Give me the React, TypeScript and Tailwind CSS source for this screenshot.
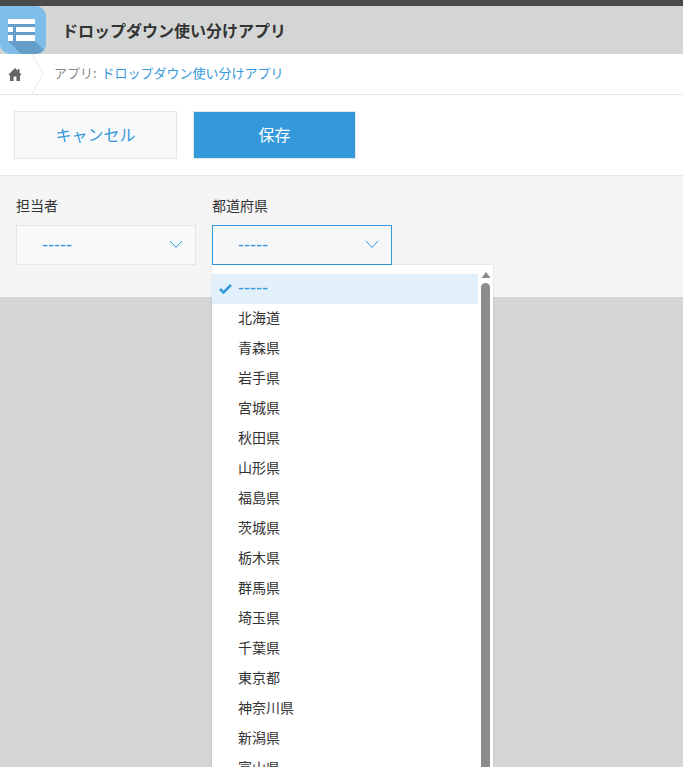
const FONT = "font-['Meiryo','Noto_Sans_CJK_JP','Noto_Sans',sans-serif]";

const PREFS = ["北海道","青森県","岩手県","宮城県","秋田県","山形県","福島県","茨城県","栃木県","群馬県","埼玉県","千葉県","東京都","神奈川県","新潟県","富山県"];

function Chevron() {
  return (
    <svg width="14" height="9" viewBox="0 0 14 9" fill="none" stroke="#3498db" strokeWidth="1">
      <path d="M1 1l6 6.5L13 1" />
    </svg>
  );
}

function Dashes() {
  return <span className="font-['Liberation_Sans',sans-serif] text-[18px] leading-none text-[#3498db]">-----</span>;
}

function AppIcon() {
  return (
    <div className="h-12 w-[46px] overflow-hidden rounded-tr-[10px] rounded-br-[10px] rounded-bl-[10px] bg-[#7dbde8]">
      <svg width="46" height="48" viewBox="0 0 46 48">
        <path d="M8 13h27v22l11 11v2H21L8 35z" fill="#659fc9" />
        <path d="M8 13h27v5H8zM8 21h5v5H8zM16 21h19v5H16zM8 29h5v6H8zM16 29h19v6H16z" fill="#fff" />
      </svg>
    </div>
  );
}

function Select({ active, label, className }: { active?: boolean; label: string; className: string }) {
  return (
    <div className={className}>
      <div className="h-[19px] text-[14px] leading-[19px] text-[#333]">{label}</div>
      <div className={`mt-[10px] flex h-10 w-[180px] items-center justify-between border pb-[1px] pl-[25px] pr-[12px] ${active ? "border-[#3498db] bg-[#f5f7f8]" : "border-[#e3e7e8] bg-[#f7f9fa]"}`}>
        <Dashes />
        <Chevron />
      </div>
    </div>
  );
}

export default function App() {
  return (
    <div className={`${FONT} relative h-[767px] w-[683px] overflow-hidden bg-[#d4d6d5]`}>
      <div className="h-[6px] bg-[#4a4a4a]" />
      <div className="flex h-12 items-center">
        <AppIcon />
        <div className="ml-[16px] text-[16px] font-bold text-[#333]">ドロップダウン使い分けアプリ</div>
      </div>
      <div className="flex h-[41px] items-center border-b border-[#e3e7e8] bg-white">
        <div className="relative h-10 w-[44px] shrink-0 self-start">
          <svg className="absolute left-[8px] top-[13px]" width="14" height="14" viewBox="0 0 14 14">
            <path d="M7 1L0.500 7.500 1.500 8.500 2 8v6h3.600V9.600h2.800V14H12V8l.5.500 1-1L11.500 5.500V2H9.800v1.800z" fill="#666" />
          </svg>
          <svg className="absolute left-[30px] top-0" width="14" height="40" viewBox="0 0 14 40" fill="none">
            <path d="M2 0l11 20L2 40" stroke="#e8eaeb" />
          </svg>
        </div>
        <div className="ml-[10px] pb-[2px] text-[13px]">
          <span className="mr-[2px] text-[#888]">アプリ: </span>
          <span className="text-[#3498db]">ドロップダウン使い分けアプリ</span>
        </div>
      </div>
      <div className="flex h-[81px] gap-[16px] border-b border-[#e3e7e8] bg-white pl-[14px] pt-[16px]">
        <button className="h-12 w-[163px] border border-[#e3e7e8] bg-[#f7f9fa] pb-[2px] text-[16px] text-[#3498db]">キャンセル</button>
        <button className="h-12 w-[163px] border border-[#e3e7e8] bg-[#3498db] pb-[2px] text-[16px] text-white">保存</button>
      </div>
      <div className="flex h-[121px] bg-[#f5f5f5] pl-4 pt-5">
        <Select label="担当者" className="w-[196px]" />
        <Select label="都道府県" active className="w-[180px]" />
      </div>
      <div className="absolute left-[212px] top-[265px] flex w-[281px] bg-white pt-[9px] shadow-[0_0_2px_rgba(0,0,0,0.15)]">
        <div className="w-[266px]">
          <div className="relative flex h-[30px] items-center bg-[#e1f0fb] pb-[3px] pl-[26px]">
            <svg className="absolute left-[7px] top-[9px]" width="13" height="11" viewBox="0 0 13 11">
              <path d="M1 6l3.500 3.500L12 2" fill="none" stroke="#3498db" strokeWidth="2.500" />
            </svg>
            <Dashes />
          </div>
          {PREFS.map((p) => (
            <div key={p} className="flex h-[30px] items-center pb-[4px] pl-[26px] text-[14px] text-[#333]">{p}</div>
          ))}
        </div>
        <div className="relative w-[15px]">
          <svg className="absolute left-[3px] top-[-2px]" width="10" height="6" viewBox="0 0 10 6">
            <path d="M5 0l4.500 6H.5z" fill="#888" />
          </svg>
          <div className="absolute left-[3px] top-[9px] h-[600px] w-[9px] rounded-t-[5px] bg-[#8c8c8c]" />
        </div>
      </div>
    </div>
  );
}
